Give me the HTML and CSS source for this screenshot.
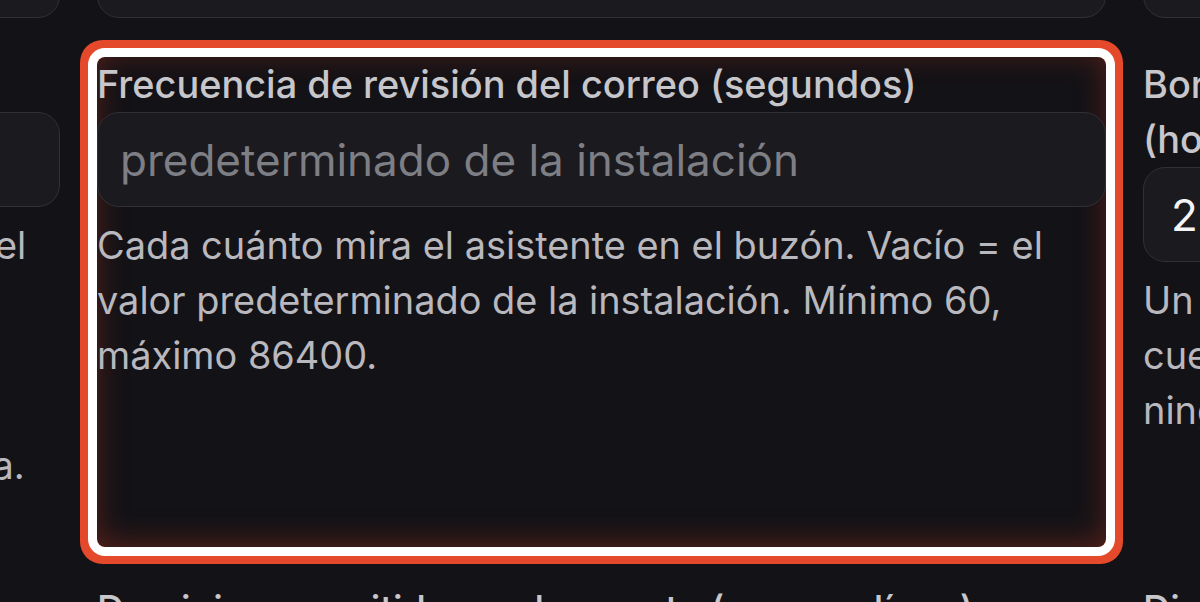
FILE: index.html
```html
<!DOCTYPE html>
<html lang="es">
<head>
<meta charset="utf-8">
<title>Ajustes del asistente de correo</title>
<link rel="stylesheet" href="styles.css">
</head>
<body>
<div class="page">
  <div class="grid">
    <div class="field top"><div class="input"></div></div>
    <div class="field top"><div class="input"></div></div>
    <div class="field top"><div class="input"></div></div>

    <div class="field">
      <label class="label">Firma de las respuestas</label>
      <div class="input"></div>
      <p class="help">Texto añadido al final de cada respuesta que manda el<br>asistente. Puede incluir varias líneas de texto<br>con el nombre, el cargo y los datos de<br>contacto que quieras mostrar a los clientes.<br>Vacío = no se añade ninguna firma en cada respuesta.</p>
    </div>

    <div class="field focus">
      <label class="label">Frecuencia de revisión del correo (segundos)</label>
      <div class="input"><span class="placeholder">predeterminado de la instalación</span></div>
      <p class="help">Cada cuánto mira el asistente en el buzón. Vacío = el valor predeterminado de la instalación. Mínimo 60, máximo 86400.</p>
    </div>

    <div class="field">
      <label class="label">Borrar del servidor los correos procesados tras<br>(horas)</label>
      <div class="input"><span class="value">2</span></div>
      <p class="help">Un correo procesado se elimina del servidor de la<br>cuenta cuando pasa este tiempo. Vacío = no se borra<br>ninguno.</p>
    </div>

    <div class="field">
      <label class="label">Remitentes bloqueados</label>
    </div>
    <div class="field">
      <label class="label">Dominios permitidos en la cuenta (uno por línea)</label>
    </div>
    <div class="field">
      <label class="label">Dirección de reenvío</label>
    </div>
  </div>
</div>
</body>
</html>
```

FILE: styles.css
```css
html, body {
  margin: 0;
  padding: 0;
  background: #131216;
}

.page {
  width: 1200px;
  height: 602px;
  overflow: hidden;
  background: #131216;
  font-family: Inter, "Noto Sans", "Liberation Sans", sans-serif;
}

.grid {
  display: grid;
  grid-template-columns: repeat(3, 1009px);
  grid-template-rows: 99px 490px auto;
  column-gap: 37px;
  row-gap: 35px;
  margin-left: -949px;
  margin-top: -77px;
}

.field {
  display: flex;
  flex-direction: column;
  min-width: 0;
}

.field.top {
  justify-content: flex-start;
}

.label {
  display: block;
  font-size: 37.9px;
  line-height: 55px;
  font-weight: 500;
  color: #c6c6cb;
}

.input {
  box-sizing: border-box;
  height: 95px;
  flex: none;
  border: 1.5px solid #313036;
  border-radius: 22px;
  background: #1b1a1f;
  display: flex;
  align-items: center;
  padding: 0 22px;
  font-size: 44px;
  color: #f4f4f6;
}

.placeholder {
  color: #7e7e85;
}

.value {
  color: #f4f4f6;
  padding-left: 5px;
}

.help {
  margin: 11px 0 0;
  font-size: 37.9px;
  line-height: 55px;
  font-weight: 400;
  color: #b8b8be;
}

.focus {
  border-radius: 8px;
  box-shadow:
    0 0 0 9px #ffffff,
    0 0 0 17px #e4492b,
    inset 0 -4px 30px rgba(185, 55, 35, 0.4);
}
```
